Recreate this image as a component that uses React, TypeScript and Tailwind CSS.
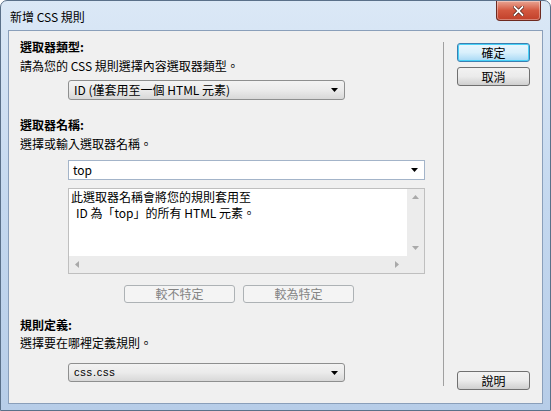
import React from "react";

const F = { fontFamily: '"Noto Sans CJK TC", "Noto Sans", sans-serif' };

function Arrow({ color = "#000" }: { color?: string }) {
  return (
    <svg width="7" height="4" viewBox="0 0 7 4">
      <path d="M0 0 H7 L3.5 4 Z" fill={color} />
    </svg>
  );
}

function Combo({ text, w, mono, h }: { text: string; w: string; mono?: boolean; h: string }) {
  return (
    <div
      className={`${w} ${h} flex items-center justify-between rounded-[3px] border border-[#8e8f8f] bg-gradient-to-b from-[#f3f3f3] via-[#ebebeb] to-[#d8d8d8] pl-[5px] pr-[6px]`}
    >
      <span
        className={mono ? "text-[11px] text-black tracking-[0.8px]" : "text-[12px] text-black"}
        style={mono ? { fontFamily: '"Liberation Sans", Arial, sans-serif' } : F}
      >
        {text}
      </span>
      <Arrow />
    </div>
  );
}

function WinButton({ label, def }: { label: string; def?: boolean }) {
  return (
    <div
      className={`w-[73px] h-[19px] flex items-center justify-center rounded-[3px] border text-[12px] text-black ${
        def
          ? "border-[#3c7fb1] bg-gradient-to-b from-[#eaf6fd] via-[#d9f0fc] to-[#a7d9f5] shadow-[inset_0_0_0_1px_#48d1f7]"
          : "border-[#707070] bg-gradient-to-b from-[#f2f2f2] via-[#ebebeb] to-[#cfcfcf]"
      }`}
      style={F}
    >
      {label}
    </div>
  );
}

function DisButton({ label }: { label: string }) {
  return (
    <div
      className="w-[111px] h-[18px] flex items-center justify-center rounded-[3px] border border-[#adb2b5] bg-[#f4f4f4] text-[12px] text-[#838383]"
      style={F}
    >
      {label}
    </div>
  );
}

export default function App() {
  return (
    <div
      className="w-[551px] h-[411px] flex flex-col rounded-t-[7px] border border-[#5a7089] bg-gradient-to-b from-[#dbe8f6] via-[#c4d8ef] to-[#b7cde8] overflow-hidden"
      style={F}
    >
      {/* title bar */}
      <div className="h-[29px] flex items-start justify-between shrink-0">
        <span className="ml-[9px] mt-[8px] text-[12px] text-black leading-[16px]" style={F}>
          新增 CSS 規則
        </span>
        <div className="mr-[9px] w-[45px] h-[20px] flex items-center justify-center rounded-b-[4px] border border-t-0 border-[#6e2a20] bg-gradient-to-b from-[#e8a493] via-[#d3573f] to-[#c1402a] shadow-[inset_0_0_0_1px_rgba(255,255,255,0.35)]">
          <svg width="11" height="10" viewBox="0 0 11 10">
            <path
              d="M1.5 1 L9.5 9 M9.5 1 L1.5 9"
              stroke="#4a1a12"
              strokeWidth="3.2"
              strokeLinecap="square"
            />
            <path d="M1.5 1 L9.5 9 M9.5 1 L1.5 9" stroke="#fff" strokeWidth="1.8" strokeLinecap="square" />
          </svg>
        </div>
      </div>

      {/* client area */}
      <div className="mx-[7px] h-[374px] flex border border-[#8a9fba] bg-[#f0f0f0]">
        {/* left */}
        <div className="w-[434px] flex flex-col pl-[11px] pt-[8px]">
          <div className="text-[12px] font-bold leading-[16px] text-black">選取器類型:</div>
          <div className="mt-[3px] text-[12px] leading-[16px] text-black">請為您的 CSS 規則選擇內容選取器類型。</div>
          <div className="mt-[6px] ml-[48px]">
            <Combo text="ID (僅套用至一個 HTML 元素)" w="w-[277px]" h="h-[20px]" />
          </div>

          <div className="mt-[17px] text-[12px] font-bold leading-[16px] text-black">選取器名稱:</div>
          <div className="mt-[3px] text-[12px] leading-[16px] text-black">選擇或輸入選取器名稱。</div>
          <div className="mt-[8px] ml-[48px] w-[357px] h-[20px] flex items-center justify-between border border-[#a3b4c9] bg-white pl-[4px] pr-[6px]">
            <span className="text-[12px] text-black" style={F}>top</span>
            <Arrow />
          </div>

          <div className="mt-[8px] ml-[48px] w-[357px] h-[86px] flex flex-col border border-[#bfbfbf] bg-[#ececec]">
            <div className="flex h-[67px]">
              <div className="flex-1 bg-white pl-[2px] text-[12px] leading-[16px] text-black" style={F}>
                <div>此選取器名稱會將您的規則套用至</div>
                <div className="pl-[5px]">ID 為「top」的所有 HTML 元素。</div>
              </div>
              <div className="w-[17px] flex flex-col items-center justify-between py-[6px] bg-[#ececec]">
                <svg width="7" height="4" viewBox="0 0 7 4">
                  <path d="M0 4 H7 L3.5 0 Z" fill="#a9a9a9" />
                </svg>
                <svg width="7" height="4" viewBox="0 0 7 4">
                  <path d="M0 0 H7 L3.5 4 Z" fill="#a9a9a9" />
                </svg>
              </div>
            </div>
            <div className="flex-1 flex items-center justify-between pl-[6px] pr-[25px]">
              <svg width="4" height="7" viewBox="0 0 4 7">
                <path d="M4 0 V7 L0 3.5 Z" fill="#a9a9a9" />
              </svg>
              <svg width="4" height="7" viewBox="0 0 4 7">
                <path d="M0 0 V7 L4 3.5 Z" fill="#a9a9a9" />
              </svg>
            </div>
          </div>

          <div className="mt-[11px] ml-[104px] flex gap-[8px]">
            <DisButton label="較不特定" />
            <DisButton label="較為特定" />
          </div>

          <div className="mt-[14px] text-[12px] font-bold leading-[16px] text-black">規則定義:</div>
          <div className="mt-[2px] text-[12px] leading-[16px] text-black">選擇要在哪裡定義規則。</div>
          <div className="mt-[12px] ml-[48px]">
            <Combo text="css.css" w="w-[277px]" h="h-[19px]" mono />
          </div>
        </div>

        {/* separator */}
        <div className="mt-[11px] mb-[17px] w-px bg-[#a0a0a0]" />

        {/* right */}
        <div className="flex-1 flex flex-col pl-[13px] pt-[12px] pb-[13px]">
          <WinButton label="確定" def />
          <div className="mt-[5px]">
            <WinButton label="取消" />
          </div>
          <div className="mt-auto">
            <WinButton label="說明" />
          </div>
        </div>
      </div>
      <div className="flex-1" />
    </div>
  );
}
